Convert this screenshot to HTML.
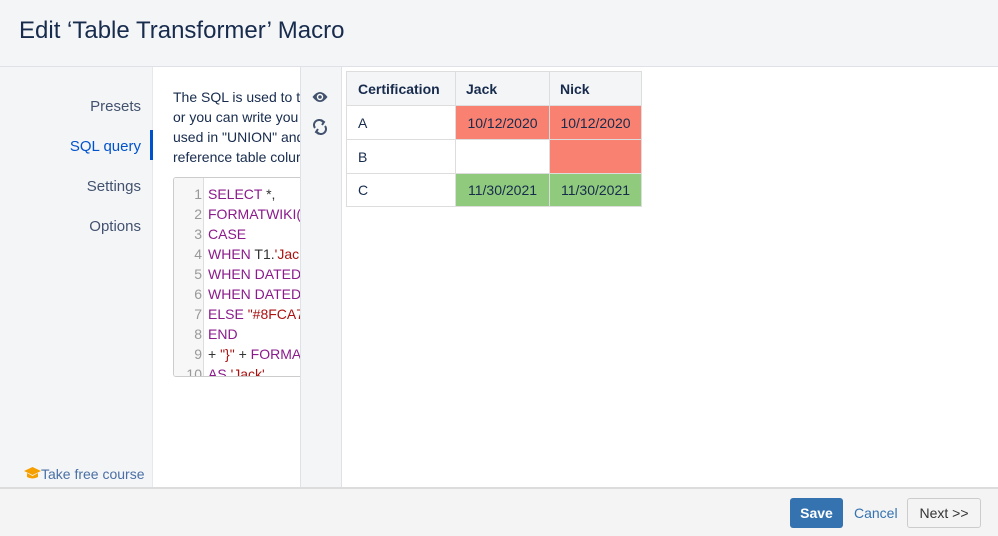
<!DOCTYPE html><html><head><style>
body{margin:0;width:998px;height:534px;position:relative;font-family:"Liberation Sans",sans-serif;background:#fff;overflow:hidden}
.a{position:absolute}
</style></head><body>
<div class="a" style="left:0;top:0;width:998px;height:66px;background:#f4f5f7;border-bottom:1px solid #dfe1e6"></div>
<div class="a" style="left:19px;top:17px;font-size:24px;color:#172b4d">Edit ‘Table Transformer’ Macro</div>
<div class="a" style="left:0;top:67px;width:152px;height:420px;background:#f4f5f7;border-right:1px solid #e6e8ec"></div>
<div class="a" style="right:857px;top:98px;font-size:15px;color:#42526e">Presets</div>
<div class="a" style="right:857px;top:138px;font-size:15px;color:#0052cc">SQL query</div>
<div class="a" style="left:150px;top:130px;width:3px;height:30px;background:#0052cc"></div>
<div class="a" style="right:857px;top:178px;font-size:15px;color:#42526e">Settings</div>
<div class="a" style="right:857px;top:218px;font-size:15px;color:#42526e">Options</div>
<svg class="a" style="left:24px;top:467px" width="17" height="13" viewBox="0 0 17 13"><path d="M0 4L8.5 0 17 4 8.5 8Z" fill="#f5a000"/><path d="M3 6v4q5.5 3 11 0V6l-5.5 3Z" fill="#f5a000"/></svg>
<div class="a" style="left:41px;top:466px;font-size:14px;color:#4a6fa5">Take free course</div>
<div class="a" style="left:173px;top:87px;width:127px;font-size:14px;line-height:20px;color:#172b4d;white-space:nowrap;overflow:hidden">The SQL is used to tr<br>or you can write you<br>used in "UNION" and<br>reference table colur</div>
<div class="a" style="left:173px;top:177px;width:127px;height:198px;border:1px solid #ccc;border-right:none;border-radius:3px 0 0 3px;overflow:hidden;background:#fff">
<div class="a" style="left:0;top:0;width:29px;height:198px;background:#f7f7f7;border-right:1px solid #ddd"></div>
<div class="a" style="left:0;top:6px;width:28px;text-align:right;font-size:14px;line-height:20px;color:#999">1<br>2<br>3<br>4<br>5<br>6<br>7<br>8<br>9<br>10</div>
<div class="a" style="left:34px;top:6px;font-size:14px;line-height:20px;color:#8b1a8b;white-space:nowrap">SELECT <span style="color:#333">*,</span><br>FORMATWIKI(<span style="color:#a11">"</span><br>CASE<br>WHEN <span style="color:#333">T1.</span><span style="color:#a11">'Jack</span><br>WHEN DATEDI<br>WHEN DATEDI<br>ELSE <span style="color:#a11">"#8FCA7D</span><br>END<br><span style="color:#333">+ </span><span style="color:#a11">"}"</span><span style="color:#333"> + </span>FORMA<br>AS <span style="color:#a11">'Jack'</span></div>
</div>
<div class="a" style="left:300px;top:67px;width:40px;height:420px;background:#f4f5f7;border-left:1px solid #dfe1e6;border-right:1px solid #dfe1e6"></div>
<svg class="a" style="left:312px;top:90px" width="16" height="14" viewBox="0 0 16 14"><path d="M0.5 7Q8-3 15.5 7Q8 17 0.5 7Z" fill="#42526e"/><circle cx="8" cy="7" r="3.2" fill="#fff"/><circle cx="8" cy="7" r="1.8" fill="#42526e"/></svg>
<svg class="a" style="left:312px;top:119px" width="16" height="16" viewBox="0 0 16 16" fill="none" stroke="#42526e" stroke-width="2"><path d="M3 9A5 5 0 0 1 11 3M13 7A5 5 0 0 1 5 13"/><path d="M9 1l3 2-2 3M7 15l-3-2 2-3"/></svg>
<table class="a" style="left:346px;top:71px;border-collapse:collapse;font-size:14px;color:#172b4d">
<tr style="height:34px;background:#f4f5f7;font-weight:bold"><td style="width:96px;padding-left:11px;border:1px solid #ddd">Certification</td><td style="width:82px;padding-left:10px;border:1px solid #ddd">Jack</td><td style="width:80px;padding-left:10px;border:1px solid #ddd">Nick</td></tr>
<tr style="height:34px"><td style="padding-left:11px;border:1px solid #ddd">A</td><td style="background:#f98171;text-align:center;border:1px solid #ddd">10/12/2020</td><td style="background:#f98171;text-align:center;border:1px solid #ddd">10/12/2020</td></tr>
<tr style="height:34px"><td style="padding-left:11px;border:1px solid #ddd">B</td><td style="border:1px solid #ddd"></td><td style="background:#f98171;border:1px solid #ddd"></td></tr>
<tr style="height:33px"><td style="padding-left:11px;border:1px solid #ddd">C</td><td style="background:#8fca7d;text-align:center;border:1px solid #ddd">11/30/2021</td><td style="background:#8fca7d;text-align:center;border:1px solid #ddd">11/30/2021</td></tr>
</table>
<div class="a" style="left:0;top:487px;width:998px;height:47px;background:#f4f4f4;border-top:2px solid #dcdcdc"></div>
<div class="a" style="left:790px;top:498px;width:53px;height:30px;background:#3572b0;border-radius:3px;color:#fff;font-weight:bold;font-size:14px;line-height:30px;text-align:center">Save</div>
<div class="a" style="left:854px;top:505px;font-size:14px;color:#3572b0">Cancel</div>
<div class="a" style="left:907px;top:498px;width:72px;height:28px;border:1px solid #ccc;background:#f4f4f4;border-radius:3px;color:#333;font-size:14px;line-height:28px;text-align:center">Next &gt;&gt;</div>
</body></html>
